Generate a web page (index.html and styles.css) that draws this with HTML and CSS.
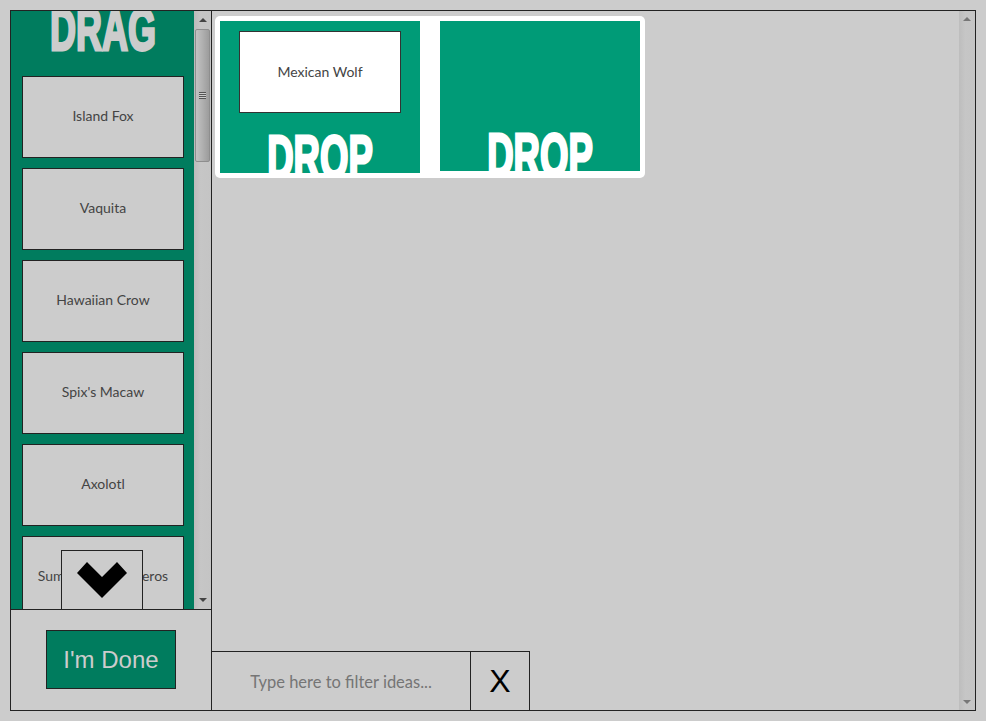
FILE: index.html
```html
<!DOCTYPE html>
<html lang="en">
<head>
<meta charset="utf-8">
<title>Drag and Drop</title>
<link rel="stylesheet" href="styles.css">
</head>
<body>
<main class="frame">
  <aside class="side">
    <div class="pool">
      <div class="pool-list">
        <div class="drag-head"><h2 class="drag-title">DRAG</h2></div>
        <div class="card">Island Fox</div>
        <div class="card">Vaquita</div>
        <div class="card">Hawaiian Crow</div>
        <div class="card">Spix's Macaw</div>
        <div class="card">Axolotl</div>
        <div class="card">Sumatran Rhinoceros</div>
      </div>
      <div class="bar bar-side">
        <span class="arrow arrow-up"></span>
        <div class="thumb"><span class="grip"></span></div>
        <span class="arrow arrow-down"></span>
      </div>
      <div class="more">
        <svg width="82" height="59" viewBox="0 0 82 59"><polygon points="16,23 26,12 41,27 56,12 66,23 41,48" fill="#000"/></svg>
      </div>
    </div>
    <div class="done-wrap"><button class="done">I'm Done</button></div>
  </aside>
  <section class="main">
    <div class="board">
      <div class="zones">
        <div class="zone zone-a">
          <div class="card card-placed">Mexican Wolf</div>
          <div class="drop-title">DROP</div>
        </div>
        <div class="zone zone-b">
          <div class="drop-title">DROP</div>
        </div>
      </div>
      <div class="filter">
        <input class="filter-input" type="text" placeholder="Type here to filter ideas...">
        <button class="clear">X</button>
      </div>
    </div>
    <div class="bar bar-main">
      <span class="arrow arrow-up"></span>
      <span class="arrow arrow-down"></span>
    </div>
  </section>
</main>
</body>
</html>
```
FILE: styles.css
```css
* { box-sizing: border-box; }
html, body { height: 100%; }
body {
  margin: 0;
  padding: 10px;
  background: #ccc;
  font-family: "Lato", "Open Sans", sans-serif;
  color: #444;
  overflow: hidden;
}
.frame {
  display: flex;
  width: 966px;
  height: 701px;
  border: 1px solid #222;
}
.side {
  width: 201px;
  display: flex;
  flex-direction: column;
  border-right: 1px solid #222;
}
.pool {
  position: relative;
  display: flex;
  height: 598px;
  overflow: hidden;
}
.pool-list {
  width: 183px;
  flex: none;
  background: #007c5e;
  padding: 0 10px 0 11px;
  overflow: hidden;
}
.drag-head {
  height: 65px;
  overflow: hidden;
}
.drag-title {
  margin: 0 -20px;
  text-align: center;
  font: bold 60px/37px "Liberation Sans", sans-serif;
  color: #ccc;
  -webkit-text-stroke: 3px #ccc;
  transform: scaleX(0.6);
}
.card {
  width: 162px;
  height: 82px;
  margin-bottom: 10px;
  padding-bottom: 3px;
  display: flex;
  align-items: center;
  justify-content: center;
  background: #ccc;
  border: 1px solid #222;
  font-size: 14px;
  text-align: center;
}
.card-placed {
  background: #fff;
  border-color: #333;
  margin: 10px auto 0;
  padding-bottom: 1px;
}
.bar {
  flex: none;
  position: relative;
  background: linear-gradient(to right, #bbb, #c6c6c6 40%, #c4c4c4);
}
.bar-side {
  width: 17px;
  padding: 18px 1px;
}
.bar-main {
  width: 16px;
  background: linear-gradient(to right, #bdbdbd, #c6c6c6 40%, #c4c4c4);
}
.arrow {
  position: absolute;
  left: 5px;
  width: 0;
  height: 0;
  border-left: 4px solid transparent;
  border-right: 4px solid transparent;
}
.arrow-up { top: 6px; border-bottom: 4px solid #444; }
.arrow-down { bottom: 6px; border-top: 4px solid #444; }
.bar-side .arrow-up { top: 7px; }
.bar-side .arrow-down { bottom: 7px; }
.bar-main .arrow { left: 4px; border-bottom-color: #777; border-top-color: #777; }
.thumb {
  height: 133px;
  display: flex;
  align-items: center;
  justify-content: center;
  background: linear-gradient(to right, #c2c2c2, #b0b0b0 50%, #9c9c9c);
  border: 1px solid #8e8e8e;
  border-radius: 2px;
}
.grip {
  width: 7px;
  height: 7px;
  background: repeating-linear-gradient(to bottom, #555 0 1px, #ccc 1px 2px);
}
.more {
  position: absolute;
  left: 50px;
  bottom: 0;
  width: 82px;
  height: 59px;
  background: #ccc;
  border: 1px solid #222;
  border-bottom: 0;
}
.more svg {
  display: block;
  margin: -1px;
}
.done-wrap {
  flex: 1;
  border-top: 1px solid #222;
  padding: 20px 35px;
}
.done {
  display: block;
  width: 130px;
  height: 59px;
  padding: 0;
  background: #007c5e;
  color: #ccc;
  border: 1px solid #222;
  font: 24px "Liberation Sans", sans-serif;
}
.main {
  flex: 1;
  min-width: 0;
  display: flex;
}
.board {
  flex: 1;
  min-width: 0;
  display: flex;
  flex-direction: column;
  justify-content: space-between;
}
.zones {
  display: flex;
  gap: 20px;
  align-self: flex-start;
  height: 162px;
  margin: 5px 0 0 3px;
  padding: 5px;
  background: #fff;
  border-radius: 5px;
}
.zone {
  width: 200px;
  background: #009b77;
  overflow: hidden;
  position: relative;
}
.zone-a { height: 152px; }
.zone-b { height: 150px; }
.drop-title {
  position: absolute;
  left: 0;
  right: 0;
  text-align: center;
  font: bold 62px/62px "Liberation Sans", sans-serif;
  color: #fff;
  -webkit-text-stroke: 3px #fff;
  transform: scaleX(0.59);
}
.zone-a .drop-title { top: 105px; }
.zone-b .drop-title { top: 103px; }
.filter {
  display: flex;
  height: 59px;
  align-self: flex-start;
  border-top: 1px solid #222;
  border-right: 1px solid #222;
}
.filter-input {
  width: 259px;
  height: 58px;
  background: #ccc;
  border: 0;
  border-right: 1px solid #222;
  text-align: center;
  font: 16.5px "Lato", sans-serif;
  color: #444;
  outline: 0;
  padding: 1px 0 0;
}
.filter-input::placeholder { color: #757575; opacity: 1; }
.clear {
  width: 58px;
  height: 58px;
  padding: 0;
  background: #ccc;
  border: 0;
  color: #000;
  font: 32px "Liberation Sans", sans-serif;
}
```
